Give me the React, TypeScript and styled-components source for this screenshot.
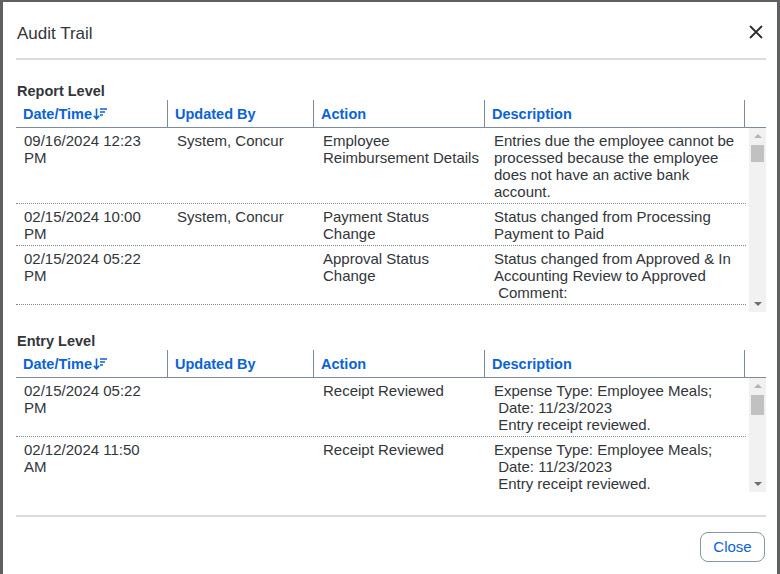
import React from "react";
import styled, { createGlobalStyle } from "styled-components";

type Row = {
  date: string;
  by: string;
  action: string;
  desc: string;
};

const reportRows: Row[] = [
  {
    date: "09/16/2024 12:23 PM",
    by: "System, Concur",
    action: "Employee Reimbursement Details",
    desc: "Entries due the employee cannot be processed because the employee does not have an active bank account.",
  },
  {
    date: "02/15/2024 10:00 PM",
    by: "System, Concur",
    action: "Payment Status Change",
    desc: "Status changed from Processing Payment to Paid",
  },
  {
    date: "02/15/2024 05:22 PM",
    by: "",
    action: "Approval Status Change",
    desc: "Status changed from Approved & In Accounting Review to Approved\n Comment:",
  },
];

const entryRows: Row[] = [
  {
    date: "02/15/2024 05:22 PM",
    by: "",
    action: "Receipt Reviewed",
    desc: "Expense Type: Employee Meals;\n Date: 11/23/2023\n Entry receipt reviewed.",
  },
  {
    date: "02/12/2024 11:50 AM",
    by: "",
    action: "Receipt Reviewed",
    desc: "Expense Type: Employee Meals;\n Date: 11/23/2023\n Entry receipt reviewed.",
  },
];

const Global = createGlobalStyle`
  html, body {
    margin: 0;
    background: #5f6062;
    overflow: hidden;
  }
  * { box-sizing: border-box; }
`;

const Dialog = styled.div`
  margin: 2px 3px 0;
  height: 572px;
  background: #fff;
  padding: 0 11px 0 13px;
  display: flex;
  flex-direction: column;
  font-family: "Liberation Sans", Arial, sans-serif;
  color: #32363a;
  & > * {
    flex-shrink: 0;
  }
`;

const Header = styled.div`
  height: 58px;
  padding: 7px 2px 0 1px;
  display: flex;
  align-items: center;
  justify-content: space-between;
  border-bottom: 2px solid #dcdcdc;
`;

const Title = styled.h1`
  margin: 0;
  font-size: 17px;
  font-weight: 400;
`;

const CloseIcon = styled.button`
  border: 0;
  background: none;
  padding: 0;
  width: 16px;
  height: 16px;
  display: flex;
  margin-bottom: 3px;
`;

const SectionLabel = styled.h2<{ $top: number }>`
  margin: ${(p) => p.$top}px 0 0 1px;
  font-size: 14.5px;
  line-height: 17px;
  font-weight: 700;
`;

const COLS = "152px 146px 171px 260px";

const HeadRow = styled.div`
  display: grid;
  grid-template-columns: ${COLS} 1fr;
  height: 28px;
  border-bottom: 1px solid #7d8b99;
`;

const HeadCell = styled.div`
  display: flex;
  align-items: center;
  padding-left: 7px;
  font-size: 14.5px;
  font-weight: 700;
  color: #0b63d6;
  border-right: 1px solid #7d8b99;
  &:last-child {
    border-right: 0;
  }
`;

const Body = styled.div<{ $h: number }>`
  height: ${(p) => p.$h}px;
  display: flex;
`;

const Rows = styled.div`
  flex: 1;
  margin-right: 3px;
  overflow: hidden;
`;

const Rail = styled.div`
  width: 17px;
  background: #f1f1f1;
  display: flex;
  flex-direction: column;
`;

const Arrow = styled.div<{ $down?: boolean }>`
  height: 17px;
  display: flex;
  align-items: center;
  justify-content: center;
  &::after {
    content: "";
    border-left: 4px solid transparent;
    border-right: 4px solid transparent;
    ${(p) =>
      p.$down
        ? "border-top: 4px solid #6e6e6e; margin-top: 1px;"
        : "border-bottom: 4px solid #b4b4b4; margin-bottom: 1px;"}
  }
`;

const Thumb = styled.div<{ $h: number }>`
  height: ${(p) => p.$h}px;
  margin: 0 2px;
  background: #c1c1c1;
`;

const Track = styled.div`
  flex: 1;
`;

const BodyRow = styled.div`
  display: grid;
  grid-template-columns: ${COLS};
  border-bottom: 1px dotted #7d8b99;
`;

const Cell = styled.div`
  padding: 4px 4px 3px 9px;
  font-size: 15px;
  line-height: 17px;
  white-space: pre-wrap;
  &:first-child {
    padding-left: 8px;
  }
  &:last-child {
    padding-right: 6px;
  }
`;

const Footer = styled.div`
  margin-top: 23px;
  border-top: 2px solid #dcdcdc;
  padding-top: 15px;
  display: flex;
  justify-content: flex-end;
`;

const CloseButton = styled.button`
  width: 65px;
  height: 30px;
  border: 1px solid #8896a4;
  border-radius: 8px;
  background: #fff;
  color: #0b63d6;
  font-family: "Liberation Sans", Arial, sans-serif;
  font-size: 15px;
  padding: 0 0 1px;
  margin-right: 1px;
`;

const SortIcon = () => (
  <svg width="17" height="14" viewBox="0 0 17 14" style={{ marginLeft: 1 }}>
    <path d="M3.5 1.5v10M0.8 8.8l2.7 3 2.7-3" stroke="#0b63d6" strokeWidth="1.6" fill="none" />
    <path d="M7 2h7M7 5h5M7 8h3" stroke="#0b63d6" strokeWidth="1.4" />
  </svg>
);

const Table = ({ rows, height, thumb }: { rows: Row[]; height: number; thumb: number }) => (
  <>
    <HeadRow>
      <HeadCell>
        Date/Time
        <SortIcon />
      </HeadCell>
      <HeadCell>Updated By</HeadCell>
      <HeadCell>Action</HeadCell>
      <HeadCell>Description</HeadCell>
      <HeadCell />
    </HeadRow>
    <Body $h={height}>
      <Rows>
        {rows.map((r, i) => (
          <BodyRow key={i}>
            <Cell>{r.date}</Cell>
            <Cell>{r.by}</Cell>
            <Cell>{r.action}</Cell>
            <Cell>{r.desc}</Cell>
          </BodyRow>
        ))}
      </Rows>
      <Rail>
        <Arrow />
        <Thumb $h={thumb} />
        <Track />
        <Arrow $down />
      </Rail>
    </Body>
  </>
);

export default function App() {
  return (
    <>
      <Global />
      <Dialog>
        <Header>
          <Title>Audit Trail</Title>
          <CloseIcon aria-label="Close">
            <svg width="16" height="16" viewBox="0 0 16 16">
              <path d="M2 2l12 12M14 2L2 14" stroke="#2b2f33" strokeWidth="1.8" />
            </svg>
          </CloseIcon>
        </Header>
        <SectionLabel $top={23}>Report Level</SectionLabel>
        <Table rows={reportRows} height={184} thumb={17} />
        <SectionLabel $top={21}>Entry Level</SectionLabel>
        <Table rows={entryRows} height={114} thumb={20} />
        <Footer>
          <CloseButton>Close</CloseButton>
        </Footer>
      </Dialog>
    </>
  );
}
